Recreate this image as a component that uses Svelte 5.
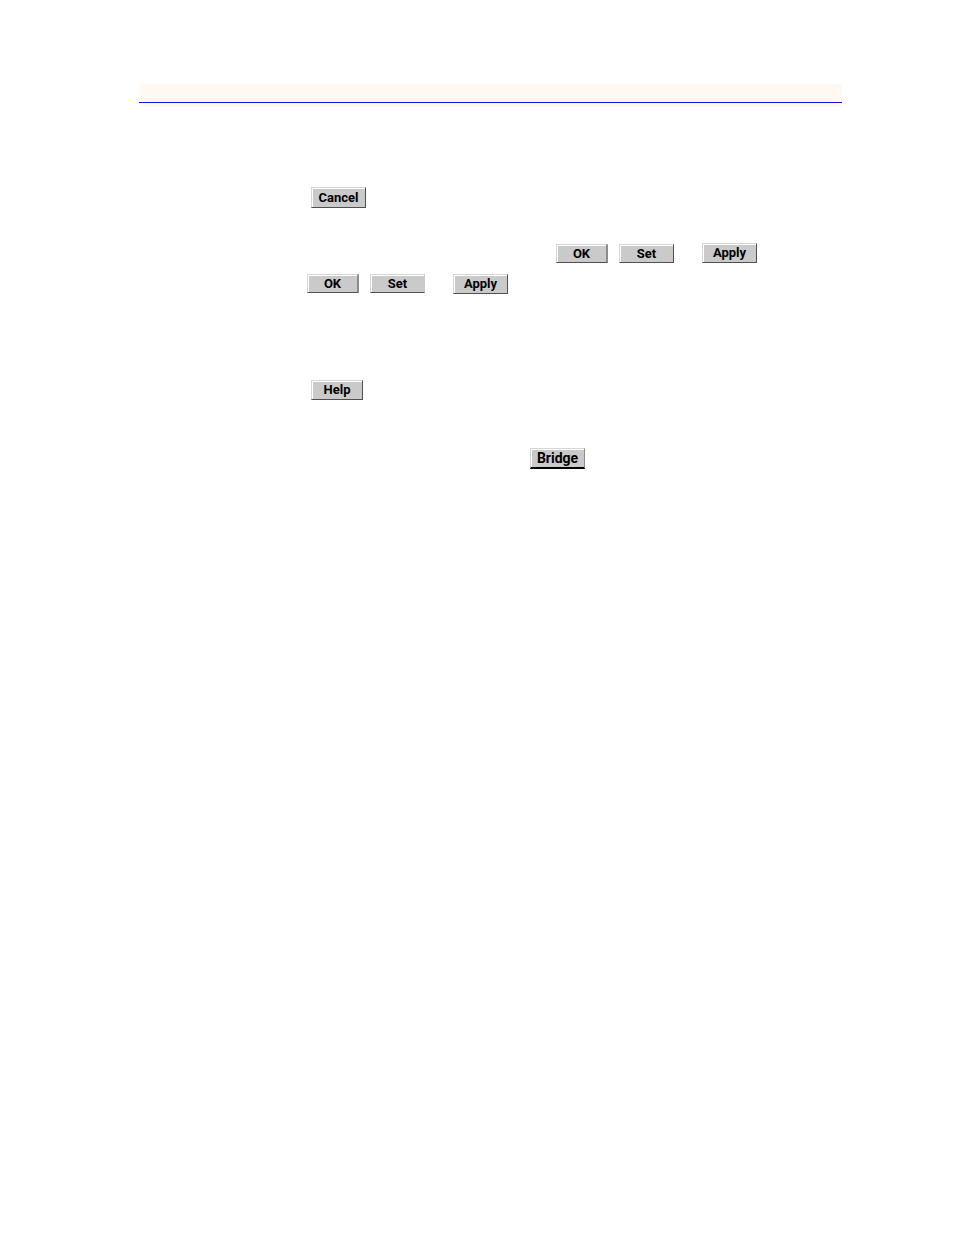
<script>
  const groups = [
    { name: 'cancel', rows: [
      { indent: 'near', buttons: [{ label: 'Cancel', kind: 'tall' }] },
    ]},
    { name: 'confirm', rows: [
      { indent: 'far', buttons: [
        { label: 'OK', kind: 'short' },
        { label: 'Set', kind: 'set' },
        { label: 'Apply', kind: 'apply' },
      ]},
      { indent: 'start', buttons: [
        { label: 'OK', kind: 'short' },
        { label: 'Set', kind: 'set faded' },
        { label: 'Apply', kind: 'apply' },
      ]},
    ]},
    { name: 'help', rows: [
      { indent: 'near', buttons: [{ label: 'Help', kind: 'small' }] },
    ]},
    { name: 'bridge', rows: [
      { indent: 'middle', buttons: [{ label: 'Bridge', kind: 'heavy' }] },
    ]},
  ];
</script>

<div class="page">
  <header class="band"></header>

  <main>
    {#each groups as group}
      <section class="group {group.name}">
        {#each group.rows as row}
          <div class="row {row.indent}">
            {#each row.buttons as button}
              <button type="button" class="btn {button.kind}">{button.label}</button>
            {/each}
          </div>
        {/each}
      </section>
    {/each}
  </main>
</div>

<style>
  :global(body) {
    margin: 0;
    background: #fff;
  }

  .page {
    padding: 84px 112px 40px 139px;
    font-family: Roboto, "Liberation Sans", Arial, sans-serif;
  }

  .band {
    height: 23px;
    background:
      linear-gradient(#1414d2, #1414d2) 0 18px / 100% 1px no-repeat,
      linear-gradient(#fff9f2, #fff9f2) 1px 0 no-repeat;
  }

  .group {
    display: flex;
    flex-direction: column;
    gap: 11px;
  }

  .cancel { margin-top: 80px; }
  .confirm { margin-top: 35px; }
  .help { margin-top: 86px; }
  .bridge { margin-top: 48px; }

  .row {
    display: flex;
    align-items: flex-end;
    gap: 11px;
  }

  .start {
    align-items: flex-start;
    padding-left: 168px;
  }

  .near { padding-left: 172px; }
  .middle { padding-left: 391px; }
  .far { padding-left: 417px; }

  .btn {
    box-sizing: border-box;
    width: 55px;
    height: 20px;
    margin: 0;
    padding: 0;
    border: 1px solid;
    border-color: #d6d6d6 #505050 #505050 #d6d6d6;
    border-radius: 0;
    background: #cacaca;
    box-shadow: inset 1px 1px 0 #fff;
    color: #000;
    font-family: inherit;
    font-size: 13px;
    font-weight: bold;
    line-height: 16px;
    text-align: center;
    cursor: pointer;
  }

  .btn:active { border-color: #505050 #d6d6d6 #d6d6d6 #505050; }

  .tall { height: 21px; }

  .short {
    width: 52px;
    height: 19px;
    border-right: 2px solid #8c8c8c;
  }

  .set { height: 19px; }
  .faded { border-right-color: #cacaca; }
  .apply { margin-left: 17px; }

  .small { width: 52px; }

  .heavy {
    height: 21px;
    border-right-color: #8c8c8c;
    border-bottom: 2px solid #000;
    font-size: 14px;
  }
</style>
